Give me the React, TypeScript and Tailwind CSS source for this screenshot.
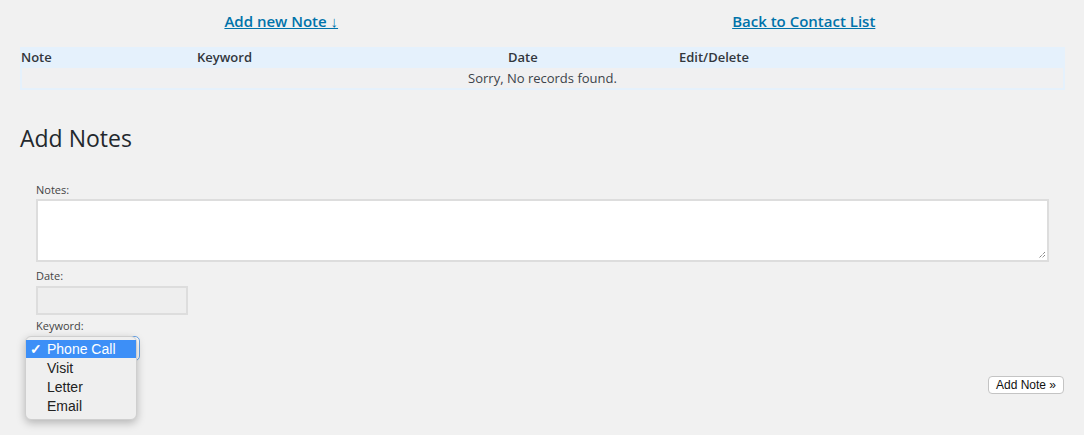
import React from "react";

export default function App() {
  return (
    <div className="w-[1084px] h-[435px] bg-[#f1f1f1] text-[#32373c] overflow-hidden" style={{ fontFamily: '"Open Sans", sans-serif' }}>
      <div className="px-[20px] pr-[19px]">
        <div className="flex pt-[9px] h-[47px]">
          <div className="w-1/2 text-center">
            <a href="#" className="text-[15px] font-semibold text-[#0073aa] underline leading-[22px]">Add new Note ↓</a>
          </div>
          <div className="w-1/2 text-center">
            <a href="#" className="text-[15px] font-semibold text-[#0073aa] underline leading-[22px]">Back to Contact List</a>
          </div>
        </div>
        <div className="bg-[#e5f1fc]">
          <div className="flex h-[21px] items-center text-[13px] font-semibold text-[#32373c]">
            <div className="w-[176px] pl-[1px]">Note</div>
            <div className="w-[312px] pl-[1px]">Keyword</div>
            <div className="w-[171px] pl-[0px]">Date</div>
            <div className="flex-1 pl-[0px]">Edit/Delete</div>
          </div>
          <div className="p-[2px] pt-0">
            <div className="bg-[#f0f0f1] h-[20px] pt-[1px] flex items-center justify-center text-[13px] text-[#3c434a]">
              Sorry, No records found.
            </div>
          </div>
        </div>
        <h2 className="mt-[33px] text-[23px] leading-[30px] text-[#23282d]">Add Notes</h2>
        <div className="pl-[16px] pr-[16px] mt-[30px]">
          <div className="text-[11px] leading-[14px] text-[#444]">Notes:</div>
          <div className="mt-[2px] h-[63px] bg-white border-2 border-[#dddddd] relative">
            <svg className="absolute right-[1px] bottom-[1px]" width="9" height="9" viewBox="0 0 9 9">
              <path d="M8 2 L2 8 M8 5 L5 8" stroke="#555" strokeWidth="1" strokeDasharray="1 1" />
            </svg>
          </div>
          <div className="mt-[7px] text-[11px] leading-[14px] text-[#444]">Date:</div>
          <div className="mt-[3px] w-[152px] h-[29px] bg-[#eeeeee] border-2 border-[#dddddd]"></div>
          <div className="mt-[4px] text-[11px] leading-[14px] text-[#444]">Keyword:</div>
          <div className="relative mt-[3px] h-[25px]">
            <div className="w-[104px] h-[25px] rounded-[5px] border border-[#6aa5e8] bg-white"></div>
            <div
              className="absolute left-[-11px] top-0 w-[112px] rounded-[6px] bg-[#efefef] border border-[#cfcfcf] shadow-[0_3px_8px_rgba(0,0,0,0.25)] pt-[3px] pb-[3px] text-[14px] text-[#222]"
              style={{ fontFamily: '"Liberation Sans", Arial, sans-serif' }}
            >
              <div className="h-[18px] leading-[18px] bg-[#3d8ff7] text-white flex mb-[1px]">
                <span className="w-[21px] pl-[4px] font-bold">✓</span>
                <span>Phone Call</span>
              </div>
              <div className="h-[19px] leading-[19px] pl-[21px]">Visit</div>
              <div className="h-[19px] leading-[19px] pl-[21px]">Letter</div>
              <div className="h-[19px] leading-[19px] pl-[21px]">Email</div>
            </div>
          </div>
          <div className="flex justify-end mt-[15px] mr-[-15px]">
            <button
              className="h-[18px] px-[7px] bg-white border border-[#c4c4c4] rounded-[4px] text-[12px] leading-[16px] text-[#111]"
              style={{ fontFamily: '"Liberation Sans", Arial, sans-serif' }}
            >
              Add Note »
            </button>
          </div>
        </div>
      </div>
    </div>
  );
}
